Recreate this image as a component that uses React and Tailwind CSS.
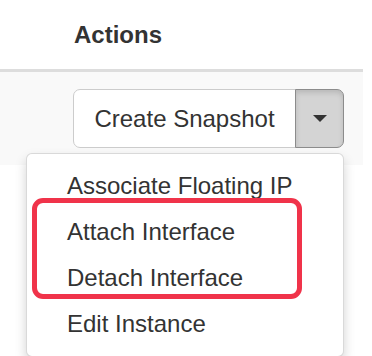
export default function App() {
    const items = ['Associate Floating IP', 'Attach Interface', 'Detach Interface', 'Edit Instance'];

    return (
        <div className="w-[372px] h-[356px] overflow-hidden bg-white text-[#333] font-['Liberation_Sans',Arial,sans-serif]">
            <div className="w-[363px]">
                {/* Table header */}
                <div className="h-[72px] pt-[21px] pl-[74px] border-b-[3px] border-[#ddd] text-[24px] leading-[28px] font-bold">
                    Actions
                </div>

                {/* Row */}
                <div className="relative h-[93px] bg-[#f9f9f9] pt-[17px] pl-[73px]">
                    <div className="flex h-[59px]">
                        <div className="w-[223px] flex items-center justify-center bg-white border border-[#ccc] rounded-l-[7px] text-[24px]">
                            Create Snapshot
                        </div>
                        <div className="w-[49px] -ml-px flex items-center justify-center bg-[#d4d4d4] border border-[#8c8c8c] rounded-r-[7px] shadow-[inset_0_3px_5px_rgba(0,0,0,0.125)]">
                            <div className="w-0 h-0 border-t-[7px] border-t-[#333] border-x-[7px] border-x-transparent" />
                        </div>
                    </div>

                    {/* Dropdown menu */}
                    <div className="absolute z-10 top-[81px] left-[26px] w-[318px] pt-[9px] pb-[9px] bg-white border border-[rgba(0,0,0,0.15)] rounded-[6px] shadow-[0_6px_12px_rgba(0,0,0,0.175)]">
                        {items.map((label) => (
                            <div key={label} className="h-[46px] pl-[40px] text-[24px] leading-[46px] whitespace-nowrap">
                                {label}
                            </div>
                        ))}
                        {/* annotation */}
                        <div className="absolute top-[44px] left-[5px] w-[270px] h-[101px] border-[5px] border-[#f0334a] rounded-[11px]" />
                    </div>
                </div>
            </div>
        </div>
    );
}
